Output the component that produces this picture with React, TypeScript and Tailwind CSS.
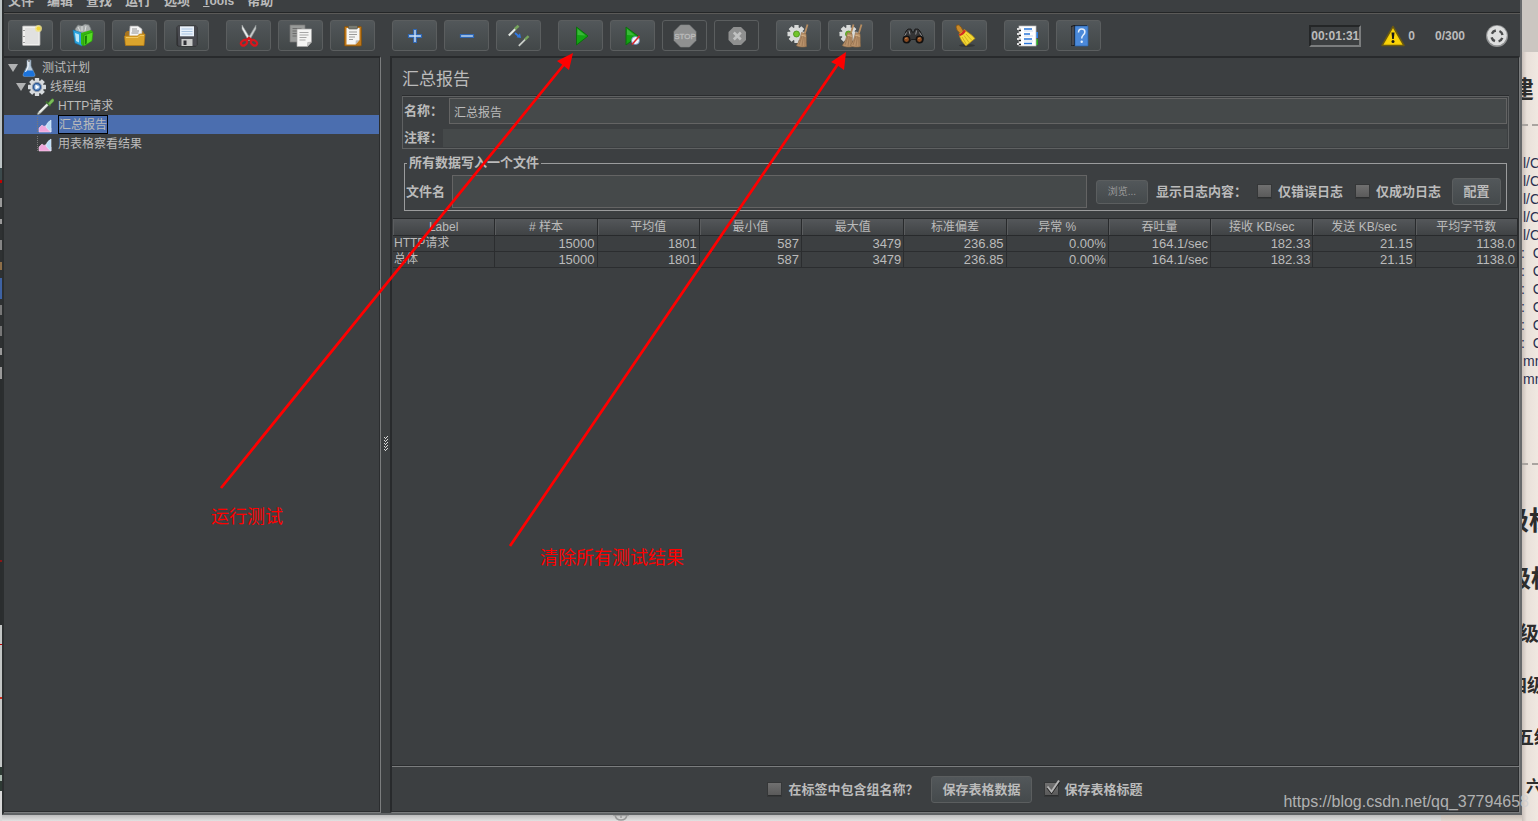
import React, { useState } from 'react';

const menus = ['文件', '编辑', '查找', '运行', '选项', 'Tools', '帮助'];

const columns = ['Label', '# 样本', '平均值', '最小值', '最大值', '标准偏差', '异常 %', '吞吐量', '接收 KB/sec', '发送 KB/sec', '平均字节数'];

const rows = [
    ['HTTP请求', '15000', '1801', '587', '3479', '236.85', '0.00%', '164.1/sec', '182.33', '21.15', '1138.0'],
    ['总体', '15000', '1801', '587', '3479', '236.85', '0.00%', '164.1/sec', '182.33', '21.15', '1138.0'],
];

const Gear = ({ cx, cy, r, fill }: { cx: number; cy: number; r: number; fill: string }) => (
    <g>
        {[0, 45, 90, 135].map((a) => (
            <rect key={a} x={cx - r * 0.24} y={cy - r} width={r * 0.48} height={r * 2} rx="0.5" fill={fill} transform={`rotate(${a} ${cx} ${cy})`} />
        ))}
        <circle cx={cx} cy={cy} r={r * 0.76} fill={fill} />
    </g>
);

const Dropper = () => (
    <g>
        <path d="M1 17l2-3 8-8 2 2-8 8-3 2z" fill="#d4d8d4" stroke="#6d736d" strokeWidth="0.7" />
        <path d="M3.500 15l7.500-7.500" stroke="#fff" strokeWidth="1" />
        <path d="M10 4.500l4.500 4.500" stroke="#3f7430" strokeWidth="1.800" />
        <path d="M12 6.500l3-3.800q1.500-1.500 2.600-.4t-.4 2.600l-3.500 3.300z" fill="#7cbb5a" stroke="#4c8a38" strokeWidth="0.7" />
    </g>
);

const Broom = ({ x }: { x: number }) => (
    <g transform={`translate(${x} 0)`}>
        <path d="M20 0.500l-3 10" stroke="#b58c60" strokeWidth="1.800" />
        <path d="M14 8.500l4.500 1.200c.6 3.500 0 7 .5 12.800-3 1-7.500.8-10.200-1 2.700-3.500 4.200-7.500 5.200-13z" fill="#b8916a" stroke="#8a6845" strokeWidth="0.6" />
        <path d="M14.500 12l-3 9M16 12l-1.500 10M17.300 12.500l.2 9.500" stroke="#8f6c49" strokeWidth="0.6" />
        <path d="M13.800 11.200l4.600 1.100" stroke="#dbb98c" strokeWidth="0.8" />
    </g>
);

const icons: Record<string, React.ReactNode> = {
    new: (
        <>
            <rect x="3.500" y="2" width="17.500" height="19.500" rx="1" fill="#f0f0ee" stroke="#aaa" strokeWidth="0.8" />
            <rect x="6" y="4" width="13.500" height="16" fill="#e1e1e0" />
            <path d="M5 6v1M5 12v1M5 18v1" stroke="#666" strokeWidth="1.200" />
            <circle cx="19.500" cy="4.500" r="3.500" fill="#f3e58a" opacity="0.8" />
            <circle cx="19.500" cy="4.500" r="2" fill="#f1d63a" />
        </>
    ),
    templates: (
        <>
            <path d="M4 5l3-4 4 1 3-2 4 1 2 4-2 7H6z" fill="#a9adad" stroke="#73787a" strokeWidth="0.7" />
            <path d="M7 3l2 4M11 2v5M15 2l-1 5" stroke="#dfe2e2" strokeWidth="0.9" />
            <path d="M2 6l9 3v13l-7-3z" fill="#2ba4df" stroke="#1676a8" strokeWidth="0.6" />
            <path d="M4 9l4 1.500v8L5 17z" fill="#b8e6f8" />
            <path d="M10 9l10-3 2 2-1 9-9 5-2-2z" fill="#35b70f" />
            <path d="M13 11l9-3-1 9-8 5z" fill="#55db23" stroke="#238c0c" strokeWidth="0.6" />
            <path d="M14 12l2-.6-.3 8-1.700 1z" fill="#167e07" />
        </>
    ),
    open: (
        <>
            <path d="M2 20V9l2-2h16l1 2v11z" fill="#a8741d" />
            <path d="M7 2h8l4 3v10H6z" fill="#f5f5f5" stroke="#999" strokeWidth="0.7" />
            <path d="M9 5h5M9 7h7M8.500 9h7" stroke="#888" strokeWidth="0.9" />
            <path d="M1.500 12h13l2-2H22l-1 11.500H2.500z" fill="#dba42c" stroke="#b77b13" strokeWidth="0.7" />
            <path d="M3 13.500h12l2-2h4" stroke="#f6d16e" strokeWidth="0.8" fill="none" />
        </>
    ),
    save: (
        <>
            <rect x="2" y="2" width="20" height="20" rx="1.500" fill="#3c3d42" stroke="#222" strokeWidth="0.8" />
            <path d="M2 2h20v20H3.500z" fill="#56575d" opacity="0.5" />
            <rect x="5" y="2.300" width="14" height="10" fill="#e9f1fa" />
            <path d="M6.500 5h11M6.500 7.500h11M6.500 10h11" stroke="#a9c3e0" strokeWidth="1" />
            <rect x="6.500" y="15" width="11" height="7" fill="#c8c9c8" />
            <rect x="8.500" y="16.500" width="3" height="4.500" fill="#303136" />
        </>
    ),
    cut: (
        <>
            <path d="M5 1l8.500 14-2 1.500L5 5z" fill="#eceeee" stroke="#9b9f9f" strokeWidth="0.6" />
            <path d="M19 1L10.500 15l2 1.500L19 5z" fill="#c7caca" stroke="#85898a" strokeWidth="0.6" />
            <ellipse cx="7" cy="18.800" rx="3.300" ry="2.400" transform="rotate(-35 7 18.800)" fill="none" stroke="#d9161c" strokeWidth="2.200" />
            <ellipse cx="17" cy="18.800" rx="3.300" ry="2.400" transform="rotate(35 17 18.800)" fill="none" stroke="#d9161c" strokeWidth="2.200" />
            <path d="M9 16.500l3-2.500 3 2.500" stroke="#d9161c" strokeWidth="2.400" fill="none" />
        </>
    ),
    copy: (
        <>
            <path d="M1 1h15v17H1z" fill="#989a99" stroke="#777" strokeWidth="0.7" />
            <path d="M3.500 4.500h9M3.500 7h9M3.500 9.500h5M3.500 12h5" stroke="#666" strokeWidth="0.9" />
            <path d="M8 5h14.500v13l-4 4.500H8z" fill="#f4f4f3" stroke="#a5a5a5" strokeWidth="0.7" />
            <path d="M10.500 8.500h9M10.500 11h9M10.500 13.500h7M10.500 16h6" stroke="#9d9d9d" strokeWidth="0.9" />
            <path d="M18.500 22.500l.2-4 3.800-.4z" fill="#c8c8c8" stroke="#999" strokeWidth="0.5" />
        </>
    ),
    paste: (
        <>
            <rect x="3.500" y="2.500" width="17" height="19.500" rx="1" fill="#bd7618" stroke="#80500e" strokeWidth="0.8" />
            <path d="M5.500 4h13v12l-4 4.500h-9z" fill="#f5f5f4" />
            <rect x="7.500" y="1.500" width="9" height="3.500" rx="1" fill="#777a72" stroke="#4f514c" strokeWidth="0.6" />
            <path d="M8 8h8M8 10.500h8M8 13h6M8 15.500h4" stroke="#9b9b9b" strokeWidth="1" />
            <path d="M14.500 20.500l.3-4 3.700-.5z" fill="#bcbcbc" />
        </>
    ),
    plus: <path d="M10.700 5.500h2.600v5.200h5.200v2.600h-5.200v5.200h-2.600v-5.200H5.500v-2.600h5.200z" fill="#cfe2f8" stroke="#2e67b5" strokeWidth="1.200" />,
    minus: <path d="M5.500 10.700h13v2.600h-13z" fill="#b9d3f2" stroke="#2e67b5" strokeWidth="1.200" />,
    toggle: (
        <>
            <g transform="translate(.5 0) scale(.67)">
                <path d="M2 17L12 7" stroke="#e4e8e4" strokeWidth="3.200" />
                <path d="M11 7.500l5.500-5" stroke="#76a35c" strokeWidth="4" />
            </g>
            <g transform="translate(10.500 10.500) scale(.67)">
                <path d="M2 17L12 7" stroke="#c9cec9" strokeWidth="2.600" />
                <path d="M11 7.500l5.500-5" stroke="#76a35c" strokeWidth="3.600" />
            </g>
            <path d="M8 9l4 3.500" stroke="#3179e3" strokeWidth="1.800" />
            <path d="M14 14l-4.500-.7 3.500-4z" fill="#3179e3" />
        </>
    ),
    start: (
        <>
            <path d="M7.500 3l11.500 9-11.500 9z" fill="#13a313" stroke="#0c6e0d" strokeWidth="1" />
            <path d="M8.500 5l8 6.500-8-.5z" fill="#4cc04a" opacity="0.7" />
        </>
    ),
    startNoTimers: (
        <>
            <path d="M5 3l12 9-12 9z" fill="#13a313" stroke="#0c6e0d" strokeWidth="1" />
            <path d="M6 5l8 6.500-8-.5z" fill="#4cc04a" opacity="0.7" />
            <circle cx="14.500" cy="16.500" r="4" fill="#eef4fc" stroke="#5d86c2" strokeWidth="0.8" />
            <path d="M11 20.500l7.500-8.500" stroke="#d9262b" strokeWidth="1.500" />
        </>
    ),
    stop: (
        <>
            <path d="M7.500 1h9L23 7.500v9L16.500 23h-9L1 16.500v-9z" fill="#8f9090" stroke="#858686" strokeWidth="0.6" />
            <text x="12" y="15" textAnchor="middle" fontSize="8" fontFamily="Liberation Sans" fill="#bcbcbc" stroke="#bcbcbc" strokeWidth="0.3">STOP</text>
        </>
    ),
    shutdown: (
        <>
            <path d="M8.500 3h7.500L21 8v8l-5 5H8.500l-5-5V8z" fill="#8f9090" />
            <path d="M8.800 8.500l7 7M15.800 8.500l-7 7" stroke="#c0c1c1" strokeWidth="2.600" />
        </>
    ),
    clear: (
        <>
            <Gear cx={9.5} cy={10} r={9} fill="#d8dad9" />
            <circle cx="9.500" cy="10" r="3" fill="#72c52c" stroke="#458c17" strokeWidth="0.8" />
            <Broom x={0.5} />
        </>
    ),
    clearAll: (
        <>
            <Gear cx={9.5} cy={10} r={9} fill="#d8dad9" />
            <circle cx="9.500" cy="10" r="3" fill="#72c52c" stroke="#458c17" strokeWidth="0.8" />
            <Broom x={-5.5} />
            <Broom x={2.5} />
        </>
    ),
    search: (
        <>
            <path d="M5 7l2-2h3l1 3h2l1-3h3l2 2 3.500 7-1 4-4 .8-3-3.300h-4l-3 3.300-4-.8-1-4z" fill="#353536" stroke="#141414" strokeWidth="0.8" />
            <path d="M5.500 8.500L3 13M8 6.500l1 4M15.500 6.500l-.8 4M18.500 8.500l2.500 4" stroke="#929396" strokeWidth="1" />
            <circle cx="5.500" cy="15.500" r="3.200" fill="#8a4a20" stroke="#111" strokeWidth="1.500" />
            <circle cx="18.500" cy="15.500" r="3.200" fill="#8a4a20" stroke="#111" strokeWidth="1.500" />
            <path d="M4 14.500l2.500-.6M17 14.500l2.500-.6" stroke="#c58350" strokeWidth="1" />
        </>
    ),
    resetSearch: (
        <>
            <ellipse cx="14" cy="21.500" rx="8" ry="1.500" fill="#222" opacity="0.5" />
            <path d="M3 3q0-2.500 2.500-2t5 6.500l-3 2.500Q3 6 3 3z" fill="#c98a28" stroke="#815111" strokeWidth="0.8" />
            <path d="M6 10l5.500-4.500 3 2.500q5 3 7.500 6.500l-9 7.500q-5-5-6-8.500z" fill="#f3d932" stroke="#ad8514" strokeWidth="0.8" />
            <path d="M9 13l4.500 7.500M11 11.500l5 7M13 10l6 6.500" stroke="#c29b18" strokeWidth="0.7" />
            <path d="M5.500 10.200q3.500-.7 5.300-4.700l2.200 1.500q-2 4-6 5z" fill="#d32c23" />
        </>
    ),
    functions: (
        <>
            <path d="M20 8h3v6h-3z" fill="#287ce0" />
            <path d="M20 15h3v6h-3z" fill="#26a51f" />
            <rect x="4" y="2" width="17" height="20" fill="#fff" stroke="#bcbcbc" strokeWidth="0.7" />
            <path d="M9 5h8M9 10h6M9 15h8M9 19.500h8" stroke="#2876d9" strokeWidth="1.300" />
            <path d="M9 7h9M9 12h9M9 17h9" stroke="#c1d4ed" strokeWidth="0.8" />
            <path d="M2 5h4M2 10h4M2 15h4M2 20h4" stroke="#ddd" strokeWidth="1.800" />
            <path d="M4 6.500h2M4 11.500h2M4 16.500h2M4 20.500h2" stroke="#222" strokeWidth="1.500" />
        </>
    ),
    help: (
        <>
            <path d="M4 2l3-1h13v20l-13 1H4z" fill="#1b1b1d" />
            <path d="M4.500 3L7 2v19l-2.500.5z" fill="#4a4a4d" />
            <rect x="8" y="2" width="13" height="20" rx="0.5" fill="#4b89d9" stroke="#2961aa" strokeWidth="0.7" />
            <path d="M11.500 8.500q0-3.500 3.200-3.500t3.200 3q0 1.800-1.800 3.200-1.400 1.200-1.400 3.300" stroke="#e6f0fc" strokeWidth="1.500" fill="none" />
            <circle cx="14.700" cy="17.700" r="1.200" fill="#e6f0fc" />
        </>
    ),
};

const toolGroups = [
    [['new', '新建'], ['templates', '模板'], ['open', '打开'], ['save', '保存']],
    [['cut', '剪切'], ['copy', '复制'], ['paste', '粘贴']],
    [['plus', '展开'], ['minus', '收起'], ['toggle', '切换']],
    [['start', '启动'], ['startNoTimers', '不停顿启动'], ['stop', '停止'], ['shutdown', '关闭']],
    [['clear', '清除'], ['clearAll', '清除全部']],
    [['search', '查找'], ['resetSearch', '重置查找']],
    [['functions', '函数助手'], ['help', '帮助']],
];

const ToolButton = ({ name, label }: { name: string; label: string }) => {
    const disabled = name === 'stop' || name === 'shutdown';
    return (
        <button
            aria-label={label}
            disabled={disabled}
            className={`flex h-[31px] w-[45px] items-center justify-center rounded-[3px] border border-[#5b5e5f] ${disabled ? '' : 'bg-linear-to-b from-[#52575a] to-[#424748]'}`}
        >
            <svg width="24" height="24" viewBox="0 0 24 24" fill="none">{icons[name]}</svg>
        </button>
    );
};

const Check = ({ label, defaultChecked }: { label: string; defaultChecked?: boolean }) => (
    <label className="flex shrink-0 items-center gap-[7px] font-bold">
        <span className="relative block size-[13px]">
            <input type="checkbox" defaultChecked={defaultChecked} className="peer block size-[13px] appearance-none border-b border-[#2c2e2f] bg-linear-to-b from-[#707070] to-[#5a5a5a] shadow-[0_0_0_1px_#353738]" />
            <svg className="pointer-events-none absolute -top-1 left-0 hidden peer-checked:block" width="16" height="16" viewBox="0 0 16 16" fill="none">
                <path d="M2.500 8.500l4 5L14 3" stroke="#222" strokeWidth="2.500" />
                <path d="M2.500 7.500l4 5L14 1.500" stroke="#b4b4b4" strokeWidth="2" />
            </svg>
        </span>
        {label}
    </label>
);

const PlanIcon = () => (
    <svg width="18" height="18" viewBox="0 0 18 18" fill="none">
        <path d="M7 1h4v6l4 8.500q.5 2-1.500 2h-9q-2 0-1.500-2L7 7z" fill="#b9cbdc" stroke="#6d7f90" strokeWidth="0.7" />
        <path d="M5 11.500h8l2 4.500-1.500 1.500h-9L3 16z" fill="#1b73dc" />
        <path d="M8 2v6l-2.500 5" stroke="#fff" strokeWidth="1" />
        <path d="M9 0v3" stroke="#777" strokeWidth="1.500" />
    </svg>
);

const GroupIcon = () => (
    <svg width="18" height="18" viewBox="0 0 18 18" fill="none">
        <Gear cx={9} cy={9} r={9} fill="#d7dadd" />
        <circle cx="9" cy="9" r="4.600" fill="#2d5a99" stroke="#8c98a8" strokeWidth="1" />
        <circle cx="9" cy="9" r="2.800" fill="#86add9" />
        <path d="M7.500 6.500l4 2.500-4 2.500z" fill="#fff" />
    </svg>
);

const SamplerIcon = () => <svg width="18" height="18" viewBox="0 0 18 18" fill="none"><Dropper /></svg>;

const ReportIcon = () => (
    <svg width="18" height="18" viewBox="0 0 18 18" fill="none">
        <path d="M1.500 1v15" stroke="#777" strokeWidth="1" strokeDasharray="1 1" />
        <path d="M3 16v-4l3-3 2 1.500 2-1 5 2.500v4z" fill="#f0a6dc" stroke="#f9d4f0" strokeWidth="0.6" />
        <path d="M10 11q0-4 5-7v12q-3-2-5-5z" fill="#b9dcf8" stroke="#e9f4fd" strokeWidth="0.6" />
    </svg>
);

const tree = [
    { name: '测试计划', icon: <PlanIcon />, pad: 'pl-1', open: true },
    { name: '线程组', icon: <GroupIcon />, pad: 'pl-3', open: true },
    { name: 'HTTP请求', icon: <SamplerIcon />, pad: 'pl-5', open: false },
    { name: '汇总报告', icon: <ReportIcon />, pad: 'pl-5', open: false },
    { name: '用表格察看结果', icon: <ReportIcon />, pad: 'pl-5', open: false },
];

// slices of the windows that lie behind the left edge
const leftSlices: [number, string][] = [
    [168, 'bg-[#bcc3c4]'], [12, 'bg-[#3c4a4c]'], [3, 'bg-[#c00000]'], [15, 'bg-[#2e3132]'], [9, 'bg-[#9a9a9a]'],
    [12, 'bg-[#2e3132]'], [5, 'bg-[#9a9a9a]'], [16, 'bg-[#2e3132]'], [10, 'bg-[#858585]'], [12, 'bg-[#2e3132]'],
    [8, 'bg-[#8d6e48]'], [8, 'bg-[#2e3132]'], [21, 'bg-[#3e62a3]'], [6, 'bg-[#2e3132]'], [10, 'bg-[#777777]'],
    [11, 'bg-[#2e3132]'], [10, 'bg-[#777777]'], [12, 'bg-[#2e3132]'], [7, 'bg-[#9a9a9a]'], [12, 'bg-[#2e3132]'],
    [12, 'bg-[#9a9a9a]'], [181, 'bg-[#2a2d2e]'], [2, 'bg-[#8c1515]'], [63, 'bg-[#2a2d2e]'], [19, 'bg-[#c3c6c5]'],
    [1, 'bg-[#c00000]'], [52, 'bg-[#c3c6c5]'], [2, 'bg-[#d03020]'], [68, 'bg-[#c3c6c5]'], [8, 'bg-[#2e3a34]'],
    [6, 'bg-[#a9b8ae]'], [10, 'bg-[#2e3a34]'],
];

const codeLines = ['l/C', 'l/C', 'l/C', 'l/C', 'l/C', ':  C', ':  C', ':  C', ':  C', ':  C', ':  C', 'mn', 'mn'];

const headings = [
    { text: '级标', style: 'h-[58px] text-[26px] -ml-[19px]' },
    { text: '级标', style: 'h-[57px] text-[24px] -ml-[15px]' },
    { text: '级标', style: 'h-[53px] text-[20px] -ml-[3px]' },
    { text: '四级', style: 'h-[53px] text-[18px] -ml-[13px]' },
    { text: '五级', style: 'h-[50px] text-[18px] -ml-[6px]' },
    { text: '六', style: 'h-[48px] text-[16px] ml-1' },
];

const buttonStyle = 'shrink-0 rounded-[3px] border border-[#5b5e5f] bg-linear-to-b from-[#52575a] to-[#454a4c]';

export default function App() {
    const [selected, setSelected] = useState('汇总报告');
    const [name, setName] = useState('汇总报告');

    return (
        <div className="relative flex h-screen overflow-hidden bg-[#d8d8d8] font-['Liberation_Sans','Noto_Sans_CJK_SC',sans-serif] text-[13px] text-[#bbbbbb]">
            <div className="w-0.5 shrink-0">
                {leftSlices.map(([h, color], i) => <div key={i} className={color} style={{ height: h }}></div>)}
            </div>

            <div className="flex min-w-0 flex-1 flex-col">
                <div className="flex min-h-0 flex-1 flex-col border-r-2 border-b-2 border-l-2 border-r-[#66696b] border-b-[#606365] border-l-[#2b2e2f] bg-[#3c3f41]">
                    <nav className="flex h-3 shrink-0 items-end gap-[13px] overflow-hidden pl-1 font-bold">
                        {menus.map((item) => <a key={item} href="#" className={item === 'Tools' ? 'text-xs leading-[22px] first-letter:underline' : 'leading-[22px]'}>{item}</a>)}
                    </nav>

                    <div className="flex h-11 shrink-0 items-center border-t border-[#242627] pt-0.5 pl-1 shadow-[inset_0_1px_0_#5b5a58]">
                        <div className="flex gap-[17px]">
                            {toolGroups.map((group, i) => (
                                <div key={i} className="flex gap-[7px]">
                                    {group.map(([icon, label]) => <ToolButton key={icon} name={icon} label={label} />)}
                                </div>
                            ))}
                        </div>
                        <div className="ml-auto flex items-center pr-[11px] text-xs font-bold">
                            <span className="border-2 border-t-[#242627] border-r-[#7b7d7e] border-b-[#7b7d7e] border-l-[#242627] leading-[18px]">00:01:31</span>
                            <svg className="mr-[3px] ml-5" width="24" height="22" viewBox="0 0 24 22" fill="none">
                                <path d="M12 1.500L23 20.500H1z" fill="#f7cf05" stroke="#6b5a10" strokeWidth="1.500" strokeLinejoin="round" />
                                <path d="M12 5L19.500 18.500h-15z" fill="#fbd408" />
                                <path d="M10.500 7.500h3l-.7 6.500h-1.600z" fill="#171717" />
                                <circle cx="12" cy="16.500" r="1.500" fill="#171717" />
                            </svg>
                            <span>0</span>
                            <span className="ml-5">0/300</span>
                            <svg className="ml-5" width="24" height="24" viewBox="0 0 24 24" fill="none">
                                <circle cx="12" cy="12" r="11" fill="#909293" />
                                <circle cx="12" cy="11.500" r="9.800" fill="#dedfdf" />
                                <circle cx="12" cy="12" r="5.600" stroke="#4b4d4e" strokeWidth="2.400" strokeDasharray="5 3.796" strokeDashoffset="-1.900" />
                            </svg>
                        </div>
                    </div>

                    <div className="flex min-h-0 flex-1">
                        <div className="w-[377px] shrink-0 border-t-2 border-r border-b border-t-[#282a2c] border-r-[#7b7d7e] border-b-[#7b7d7e] shadow-[inset_-1px_-1px_0_#2b2d2f]">
                            {tree.map((node) => {
                                const active = node.name === selected;
                                return (
                                    <div key={node.name} className={`mr-px flex h-[19px] cursor-pointer items-center gap-1 text-xs ${node.pad} ${active ? 'bg-[#4b6eaf]' : ''}`} onClick={() => setSelected(node.name)}>
                                        <div className="flex items-center gap-0.5">
                                            <svg width="10" height="8" viewBox="0 0 10 8">{node.open && <path d="M0 0h10L5 8z" fill="#b0b1b2" />}</svg>
                                            {node.icon}
                                        </div>
                                        <span className={active ? 'border border-black pt-0.5 leading-[15px]' : 'pt-0.5 leading-[17px]'}>{node.name}</span>
                                    </div>
                                );
                            })}
                        </div>

                        <div className="flex w-[9px] shrink-0 items-center justify-center pt-[18px] pl-0.5">
                            <svg width="5" height="16" viewBox="0 0 5 16">
                                {[0, 3, 6, 9, 12].map((y) => (
                                    <g key={y} fill="#d8d8d8">
                                        <rect x="0" y={y + 1} width="1" height="1" />
                                        <rect x="1" y={y + 2} width="1" height="1" />
                                        <rect x="3" y={y} width="1" height="1" />
                                        <rect x="2" y={y + 1} width="1" height="1" />
                                    </g>
                                ))}
                            </svg>
                        </div>

                        <main className="flex min-w-0 flex-1 flex-col border-t-2 border-r border-b border-l-2 border-t-[#282a2c] border-r-[#7b7d7e] border-b-[#7b7d7e] border-l-[#282a2c] shadow-[inset_-1px_-1px_0_#2b2d2f]">
                            <h1 className="px-[10px] pt-1.5 text-[17px] leading-8">汇总报告</h1>

                            <div className="mx-[10px] flex flex-col gap-[5px] border border-[#5f6162] p-px font-bold shadow-[0_-1px_0_#2b2d2f]">
                                <div className="flex items-center gap-[6px]">
                                    <label htmlFor="name" className="w-[39px] leading-[18px] whitespace-nowrap">名称：</label>
                                    <input id="name" value={name} onChange={(e) => setName(e.target.value)} className="h-[26px] min-w-0 flex-1 border border-[#646464] bg-[#45494a] px-1 text-xs font-normal outline-none" />
                                </div>
                                <div className="flex items-center">
                                    <label htmlFor="comment" className="w-[39px] leading-[18px] whitespace-nowrap">注释：</label>
                                    <input id="comment" className="h-[18px] min-w-0 flex-1 bg-[#45494a] px-1 text-xs font-normal outline-none" />
                                </div>
                            </div>

                            <fieldset className="mx-3 mt-[7px] min-w-0 border border-[#9b9c9d] px-px pb-0.5 font-bold">
                                <legend className="ml-px px-0.5 leading-[14px]">所有数据写入一个文件</legend>
                                <div className="flex items-center pt-[5px]">
                                    <label htmlFor="file" className="mr-[7px] shrink-0">文件名</label>
                                    <input id="file" className="h-[33px] min-w-0 flex-1 border border-[#646464] bg-[#45494a] px-1 font-normal outline-none" />
                                    <button className={`ml-[9px] h-6 w-[52px] text-[10px] font-normal text-[#999999] ${buttonStyle}`}>浏览...</button>
                                    <span className="mr-[11px] ml-2 shrink-0">显示日志内容：</span>
                                    <div className="flex gap-[13px]">
                                        <Check label="仅错误日志" />
                                        <Check label="仅成功日志" />
                                    </div>
                                    <button className={`mr-1 ml-[11px] h-[27px] w-[49px] font-bold ${buttonStyle}`}>配置</button>
                                </div>
                            </fieldset>

                            <div className="mt-[7px] min-h-0 flex-1 px-px">
                                <table className="w-full table-fixed border-separate border-spacing-0 leading-[15px]">
                                    <thead>
                                        <tr className="h-[18px] text-xs">
                                            {columns.map((col) => (
                                                <th key={col} className="border-t border-r border-b border-[#282a2c] bg-linear-to-b from-[#54575a] to-[#404345] p-0 leading-4 font-normal whitespace-nowrap shadow-[inset_1px_0_0_#5b5d5f]">{col}</th>
                                            ))}
                                        </tr>
                                    </thead>
                                    <tbody>
                                        {rows.map((row) => (
                                            <tr key={row[0]}>
                                                {row.map((cell, i) => (
                                                    <td key={i} className={`h-4 border-r border-b border-[#2b2d2f] py-0 ${i === 0 ? 'px-px text-xs leading-[15px]' : 'px-0.5 text-right'}`}>{cell}</td>
                                                ))}
                                            </tr>
                                        ))}
                                    </tbody>
                                </table>
                            </div>

                            <div className="flex h-[46px] shrink-0 items-center justify-center gap-[13px] border-t border-[#7b7d7e] shadow-[0_-1px_0_#2b2d2f]">
                                <Check label="在标签中包含组名称？" />
                                <button className={`h-[27px] px-[10px] font-bold ${buttonStyle}`}>保存表格数据</button>
                                <Check label="保存表格标题" defaultChecked />
                            </div>
                        </main>
                    </div>
                </div>

                <div className="flex h-[6px] shrink-0 justify-between bg-linear-to-b from-[#bcbcbc] to-[#e2e2e2]">
                    <svg className="ml-[611px]" width="16" height="6" viewBox="0 0 16 6" fill="none">
                        <path d="M0 0h16M2 0q1 5 6 5t6-5M8 0v3" stroke="#999" strokeWidth="1.500" />
                    </svg>
                    <div className="w-[81px] bg-linear-to-b from-[#c4bbb3] to-[#e2d9d1]"></div>
                </div>
            </div>

            <aside className="w-4 shrink-0 overflow-hidden bg-linear-to-r from-[#c9c0ba] via-[#e9e1da] via-30% to-[#f0e8e1] whitespace-pre text-[#2d2d2d]">
                <div className="h-[52px] bg-[#cbc6c1]"></div>
                <div className="-ml-3 h-[72px] text-2xl leading-[76px] font-bold">建</div>
                <div className="h-[30px] border-t-2 border-dashed border-[#a9a4a0]"></div>
                {codeLines.map((line, i) => <div key={i} className={`text-sm leading-[18px] text-[#2b3050] ${line.startsWith(':') ? '-ml-px' : 'pl-px'}`}>{line}</div>)}
                <div className="mb-[27px] h-[77px] border-b-2 border-dashed border-[#a9a4a0]"></div>
                {headings.map((h, i) => <div key={i} className={`flex items-center font-bold ${h.style}`}>{h.text}</div>)}
            </aside>

            {/* notes drawn over the window */}
            <svg className="pointer-events-none absolute top-0 left-0" width="1538" height="821" viewBox="0 0 1538 821" fill="none">
                <path d="M221 488L566 62M510 546L840 61" stroke="#ff0000" strokeWidth="2.700" />
                <path d="M573 53L557 61L562 64.500L569 70zM846 52L831 62L837 65L844 70z" fill="#ff0000" />
            </svg>
            <p className="absolute top-[504px] left-[211px] text-lg leading-[26px] text-[#ff0000]">运行测试</p>
            <p className="absolute top-[545px] left-[540px] text-lg leading-[26px] text-[#ff0000]">清除所有测试结果</p>
            <p className="absolute right-[9px] bottom-[9px] text-base leading-5 text-[#d0d0d0]/80">https://blog.csdn.net/qq_37794658</p>
        </div>
    );
}
